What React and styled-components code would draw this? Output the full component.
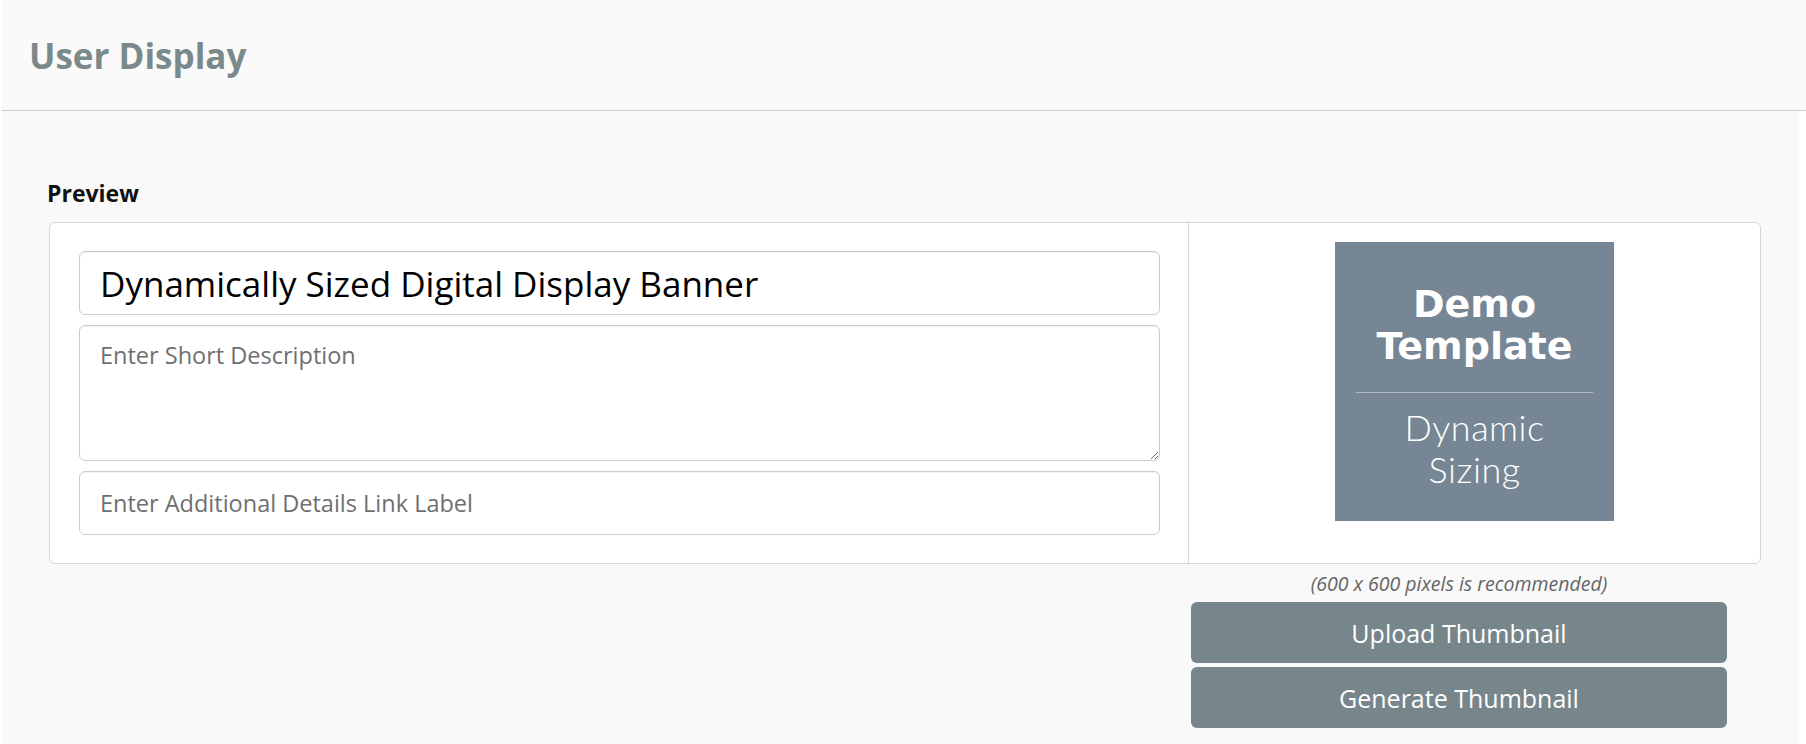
import React from "react";
import styled, { createGlobalStyle } from "styled-components";

const GlobalStyle = createGlobalStyle`
  html, body {
    margin: 0;
    padding: 0;
    background: #ffffff;
    font-family: "Open Sans", "Liberation Sans", sans-serif;
  }
  * {
    box-sizing: border-box;
  }
`;

const Page = styled.div`
  min-height: 744px;
  margin: 0 7px 0 2px;
  background: #f9f9f9;
`;

const Header = styled.header`
  height: 111px;
  display: flex;
  align-items: center;
  padding-left: 27px;
  background: #fafafa;
  border-bottom: 1px solid #cfcfcf;
  margin-right: -7px;
`;

const Title = styled.h1`
  margin: 0;
  font-size: 35px;
  font-weight: 700;
  color: #7a898a;
`;

const Main = styled.main`
  padding: 67px 38px 0 47px;
`;

const SectionLabel = styled.div`
  font-size: 23px;
  font-weight: 700;
  line-height: 30px;
  color: #111;
  margin: 0 0 14px -2px;
`;

const Card = styled.div`
  display: flex;
  background: #fff;
  border: 1px solid #d6d6d6;
  border-radius: 6px;
`;

const Fields = styled.div`
  width: 1139px;
  display: flex;
  flex-direction: column;
  gap: 10px;
  padding: 28px 28px 28px 29px;
  border-right: 1px solid #d6d6d6;
`;

const Field = styled.input`
  height: 64px;
  width: 100%;
  padding: 0 20px;
  border: 1px solid #cccccc;
  border-radius: 6px;
  box-shadow: inset 0 1px 1px rgba(0, 0, 0, 0.06);
  font-family: "Open Sans", sans-serif;
  font-size: ${(p) => (p.$big ? "35px" : "23.5px")};
  color: #000;
  background: #fff;
  outline: none;

  &::placeholder {
    color: #6f6f6f;
  }
`;

const Area = styled.textarea`
  height: 136px;
  width: 100%;
  padding: 13px 20px;
  border: 1px solid #cccccc;
  border-radius: 6px;
  box-shadow: inset 0 1px 1px rgba(0, 0, 0, 0.06);
  font-family: "Open Sans", sans-serif;
  font-size: 23.5px;
  line-height: 32px;
  resize: vertical;
  outline: none;

  &::placeholder {
    color: #6f6f6f;
  }
`;

const ThumbCol = styled.div`
  flex: 1;
  display: flex;
  justify-content: center;
  padding-top: 19px;
`;

const Thumb = styled.div`
  width: 279px;
  height: 279px;
  background: #768694;
  color: #fff;
  display: flex;
  flex-direction: column;
  align-items: center;
  padding-top: 41px;
  text-align: center;
`;

const ThumbHead = styled.div`
  font-family: "DejaVu Sans", "Lato", sans-serif;
  font-size: 38px;
  font-weight: 700;
  line-height: 42px;
`;

const ThumbRule = styled.div`
  width: 237px;
  height: 1px;
  background: rgba(255, 255, 255, 0.45);
  margin: 25px 0 13px;
`;

const ThumbSub = styled.div`
  font-family: "Lato", "Open Sans", sans-serif;
  font-size: 36px;
  font-weight: 300;
  line-height: 42px;
  letter-spacing: 0.5px;
`;

const Below = styled.div`
  display: flex;
`;

const Spacer = styled.div`
  width: 1142px;
`;

const Actions = styled.div`
  width: 536px;
  display: flex;
  flex-direction: column;
  gap: 4px;
  padding-top: 8px;
`;

const Note = styled.div`
  text-align: center;
  font-size: 19.5px;
  font-style: italic;
  line-height: 24px;
  color: #666;
  margin-bottom: 2px;
`;

const Button = styled.button`
  height: 61px;
  border: none;
  border-radius: 6px;
  background: #77868a;
  color: #fff;
  font-family: "Open Sans", sans-serif;
  font-size: 25px;
  cursor: pointer;
`;

function App() {
  return (
    <>
      <GlobalStyle />
      <Page>
        <Header>
          <Title>User Display</Title>
        </Header>
        <Main>
          <SectionLabel>Preview</SectionLabel>
          <Card>
            <Fields>
              <Field $big defaultValue="Dynamically Sized Digital Display Banner" />
              <Area placeholder="Enter Short Description" />
              <Field placeholder="Enter Additional Details Link Label" />
            </Fields>
            <ThumbCol>
              <Thumb>
                <ThumbHead>
                  Demo
                  <br />
                  Template
                </ThumbHead>
                <ThumbRule />
                <ThumbSub>
                  Dynamic
                  <br />
                  Sizing
                </ThumbSub>
              </Thumb>
            </ThumbCol>
          </Card>
          <Below>
            <Spacer />
            <Actions>
              <Note>(600 x 600 pixels is recommended)</Note>
              <Button>Upload Thumbnail</Button>
              <Button>Generate Thumbnail</Button>
            </Actions>
          </Below>
        </Main>
      </Page>
    </>
  );
}

export default App;
